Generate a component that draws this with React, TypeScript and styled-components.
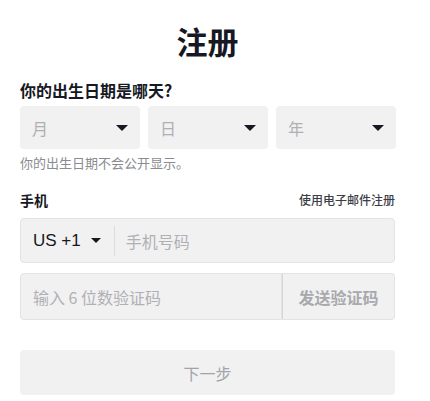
import styled, { createGlobalStyle } from "styled-components"

const GlobalStyle = createGlobalStyle`
  html, body {
    margin: 0;
    padding: 0;
    background: #fff;
    font-family: "Noto Sans CJK SC", "Liberation Sans", sans-serif;
  }
`

function Caret({ size = 12 }: { size?: number }) {
  return (
    <svg width={size} height={size / 2} viewBox="0 0 12 6">
      <path d="M0 0 L12 0 L6 6 Z" fill="#161823" />
    </svg>
  )
}

const dateFields = ["月", "日", "年"]

function App() {
  return (
    <>
      <GlobalStyle />
      <Page>
        <Title>注册</Title>
        <Label>你的出生日期是哪天?</Label>
        <DateRow>
          {dateFields.map((f) => (
            <Select key={f}>
              <span>{f}</span>
              <Caret />
            </Select>
          ))}
        </DateRow>
        <Hint>你的出生日期不会公开显示。</Hint>
        <PhoneHeader>
          <SubLabel>手机</SubLabel>
          <EmailLink>使用电子邮件注册</EmailLink>
        </PhoneHeader>
        <PhoneBox>
          <Country>
            US +1
            <Caret size={10} />
          </Country>
          <Divider />
          <Placeholder>手机号码</Placeholder>
        </PhoneBox>
        <CodeRow>
          <CodeInput>
            <Placeholder>输入 6 位数验证码</Placeholder>
          </CodeInput>
          <SendButton>发送验证码</SendButton>
        </CodeRow>
        <NextButton>下一步</NextButton>
      </Page>
    </>
  )
}

const Page = styled.div`
  width: 430px;
  box-sizing: border-box;
  padding: 20px 35px 0 20px;
  display: flex;
  flex-direction: column;
`

const Title = styled.h1`
  margin: 0;
  text-align: center;
  font-size: 31px;
  line-height: 42px;
  font-weight: 700;
  color: #161823;
`

const Label = styled.div`
  margin-top: 17px;
  font-size: 16px;
  line-height: 22px;
  font-weight: 700;
  color: #161823;
`

const DateRow = styled.div`
  margin-top: 5px;
  display: grid;
  grid-template-columns: repeat(3, 120px);
  gap: 8px;
`

const Select = styled.div`
  height: 43px;
  box-sizing: border-box;
  padding: 0 12px 0 12px;
  background: #f1f1f2;
  border-radius: 4px;
  display: flex;
  align-items: center;
  justify-content: space-between;
  font-size: 16px;
  color: #b0b0b4;
`

const Hint = styled.div`
  margin-top: 5px;
  font-size: 13px;
  line-height: 18px;
  color: #8a8b91;
`

const PhoneHeader = styled.div`
  margin-top: 18px;
  display: flex;
  align-items: center;
  justify-content: space-between;
`

const SubLabel = styled.div`
  font-size: 14px;
  line-height: 20px;
  font-weight: 700;
  color: #161823;
`

const EmailLink = styled.div`
  font-size: 12px;
  line-height: 20px;
  font-weight: 500;
  color: #3d3e45;
`

const FieldBox = styled.div`
  box-sizing: border-box;
  background: #f1f1f2;
  border: 1px solid #e3e3e4;
  display: flex;
  align-items: center;
  font-size: 16px;
`

const PhoneBox = styled(FieldBox)`
  margin-top: 8px;
  height: 45px;
  border-radius: 4px;
  padding: 0 12px;
`

const Country = styled.div`
  display: flex;
  align-items: center;
  gap: 10px;
  font-family: "Liberation Sans", sans-serif;
  font-size: 17px;
  color: #161823;
`

const Divider = styled.div`
  width: 1px;
  height: 30px;
  background: #dcdcde;
  margin: 0 11px 0 13px;
`

const Placeholder = styled.span`
  color: #b0b0b4;
`

const CodeRow = styled.div`
  margin-top: 10px;
  display: flex;
  height: 47px;
`

const CodeInput = styled(FieldBox)`
  flex: 0 0 262px;
  padding: 0 12px;
  border-radius: 4px 0 0 4px;
`

const SendButton = styled(FieldBox)`
  flex: 1;
  justify-content: center;
  border-left: 1px solid #d6d6d8;
  border-radius: 0 4px 4px 0;
  font-weight: 600;
  color: #a8a9ae;
`

const NextButton = styled.div`
  margin-top: 30px;
  height: 45px;
  border-radius: 4px;
  background: #f1f1f2;
  display: flex;
  align-items: center;
  justify-content: center;
  font-size: 16px;
  color: #a3a4a9;
`

export default App
